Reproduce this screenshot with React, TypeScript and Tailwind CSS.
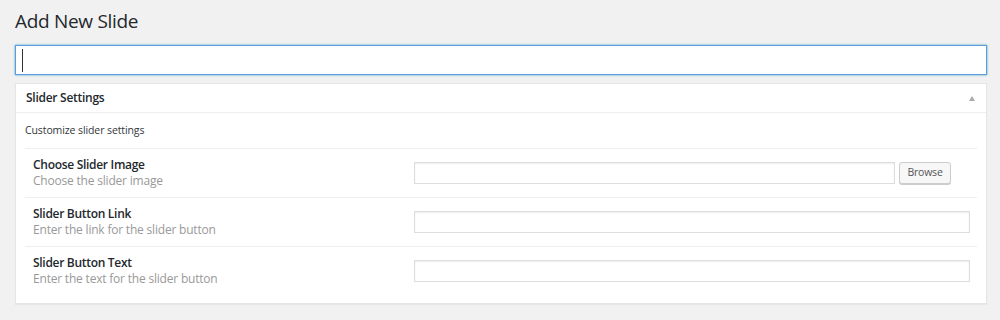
const fields = [
  { label: 'Choose Slider Image', desc: 'Choose the slider image', browse: true },
  { label: 'Slider Button Link', desc: 'Enter the link for the slider button', browse: false },
  { label: 'Slider Button Text', desc: 'Enter the text for the slider button', browse: false },
];

export default function App() {
  return (
    <div className="min-h-[320px] w-[1000px] bg-[#f1f1f1] px-[15px] pt-[7px] font-['Open_Sans',sans-serif] text-[#23282d]">
      <h1 className="text-[19px] leading-[28px] font-normal tracking-[-0.3px]">Add New Slide</h1>

      {/* title input, focused */}
      <div className="mt-[10px] flex h-[30px] w-[972px] items-center border border-[#5b9dd9] bg-white pl-[6px] shadow-[0_0_2px_rgba(30,140,190,0.8)]">
        <span className="h-[23px] w-px bg-[#333]" />
      </div>

      {/* settings box */}
      <div className="mt-[8px] w-[972px] border border-[#e5e5e5] bg-white shadow-[0_1px_1px_rgba(0,0,0,0.04)]">
        <div className="flex h-[29px] items-center justify-between border-b border-[#eee] pl-[10px] pr-[11px]">
          <span className="text-[12px] font-semibold tracking-[-0.27px] text-[#23282d]">Slider Settings</span>
          <span className="h-0 w-0 border-x-[3.5px] border-b-[5px] border-x-transparent border-b-[#aaa]" />
        </div>

        <div className="px-[9px] pb-[8px]">
          <p className="pt-[9px] pb-[10px] text-[10.5px] leading-[16px] tracking-[-0.1px] text-[#32373c]">Customize slider settings</p>
          {fields.map((f) => (
            <div key={f.label} className="grid grid-cols-[389px_1fr] border-t border-[#eee]">
              <div className="pt-[8px] pb-[8px] pl-[8px] leading-[16px]">
                <div className="text-[12px] font-semibold tracking-[-0.3px] text-[#23282d]">{f.label}</div>
                <div className="text-[12px] tracking-[-0.2px] text-[#999]">{f.desc}</div>
              </div>
              <div className="flex items-center gap-[4px] pr-[7px]">
                <div
                  className={
                    f.browse
                      ? 'h-[22px] w-[481px] border border-[#ddd] bg-white shadow-[inset_0_1px_2px_rgba(0,0,0,0.07)]'
                      : 'h-[22px] flex-1 border border-[#ddd] bg-white shadow-[inset_0_1px_2px_rgba(0,0,0,0.07)]'
                  }
                />
                {f.browse && (
                  <button className="flex h-[22px] w-[52px] items-center justify-center rounded-[3px] border border-[#ccc] bg-[#f7f7f7] text-[10.5px] tracking-[-0.2px] text-[#555] shadow-[0_1px_0_#ccc]">
                    Browse
                  </button>
                )}
              </div>
            </div>
          ))}
        </div>
      </div>
    </div>
  );
}
